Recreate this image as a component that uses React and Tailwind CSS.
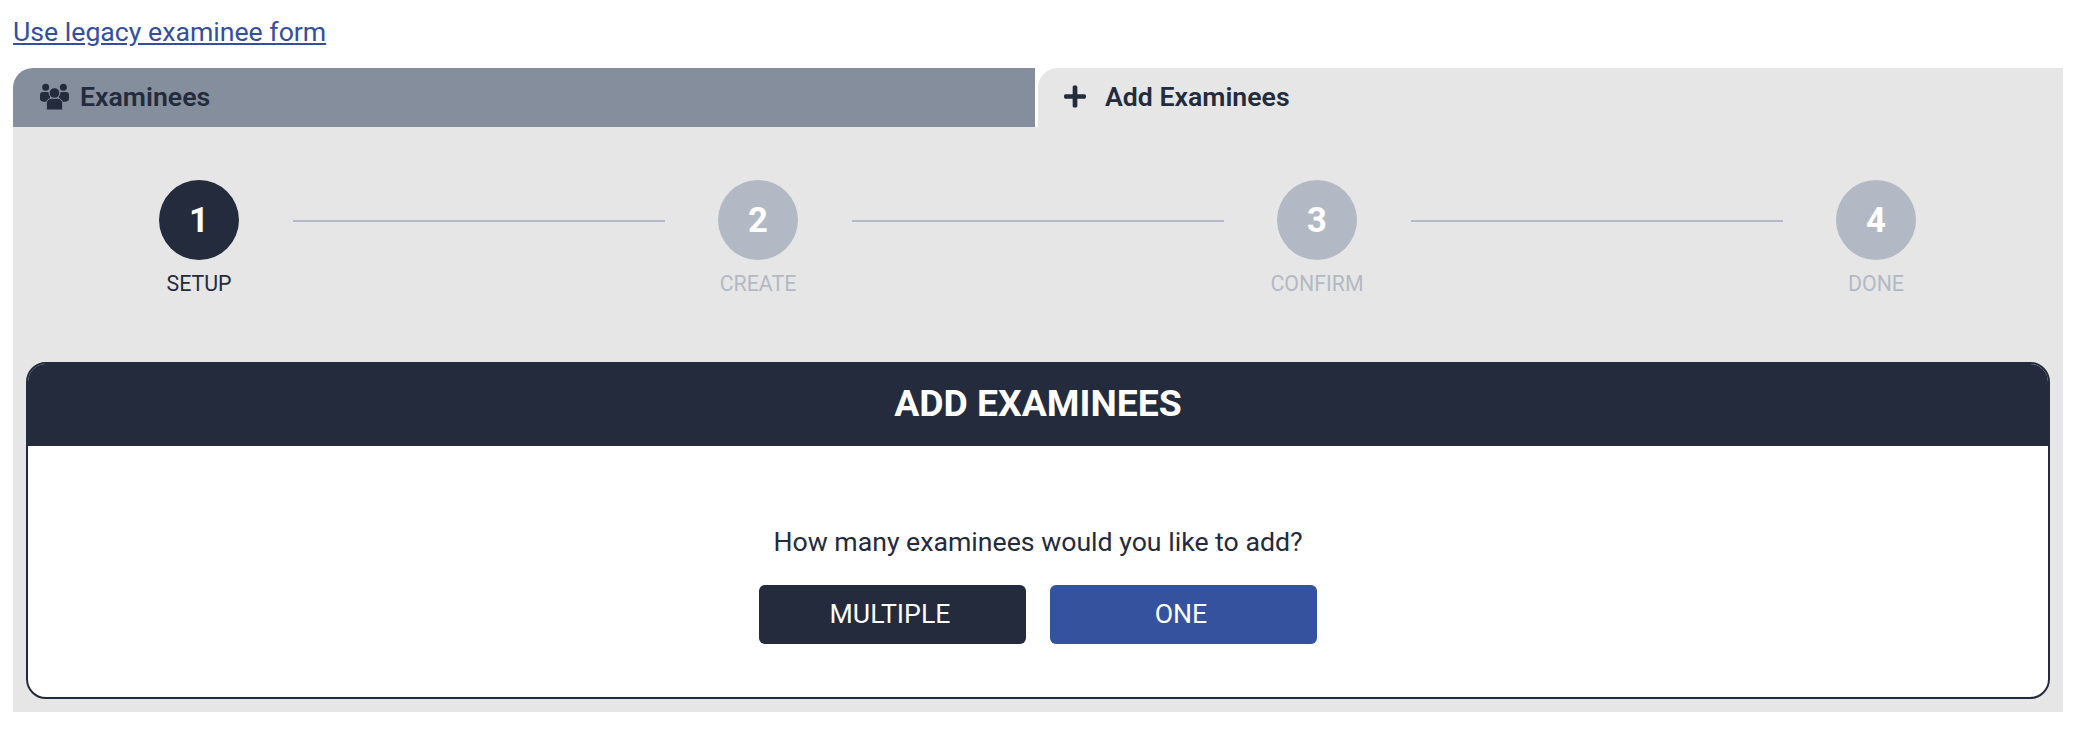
import { FaPlus } from 'react-icons/fa'

const steps = [
  { n: 1, label: 'SETUP', active: true },
  { n: 2, label: 'CREATE' },
  { n: 3, label: 'CONFIRM' },
  { n: 4, label: 'DONE' },
]

function UsersIcon() {
  return (
    <svg viewBox="0 0 87 81" className="w-[29px] h-[27px] shrink-0" fill="#232b3c">
      <circle cx="17" cy="13" r="10.5" />
      <circle cx="70" cy="13" r="10.5" />
      <rect x="0" y="27" width="30" height="29" rx="10" />
      <rect x="57" y="27" width="30" height="29" rx="10" />
      <circle cx="43.5" cy="30" r="16" stroke="#858e9c" strokeWidth="3" />
      <path d="M19 81 V62 C19 52 26 46 34 46 H53 C61 46 68 52 68 62 V81 Z" stroke="#858e9c" strokeWidth="3" />
    </svg>
  )
}

function Step({ step }) {
  return (
    <div className="w-20 flex flex-col items-center shrink-0">
      <div className={`w-20 h-20 rounded-full flex items-center justify-center text-white font-bold text-[34.67px] ${step.active ? 'bg-[#232b3c]' : 'bg-[#b3b9c4]'}`}>
        {step.n}
      </div>
      <div className={`mt-[14px] text-[21.33px] leading-[20px] whitespace-nowrap ${step.active ? 'text-[#232b3c]' : 'text-[#b3b9c4]'}`}>{step.label}</div>
    </div>
  )
}

export default function App() {
  return (
    <div className="w-[2084px] h-[740px] bg-white text-[#232b3c] font-['Roboto',sans-serif] pl-[13px] pr-[21px]">
      <div className="h-[68px] pt-[14px]">
        <a href="#" className="text-[#344f9f] underline text-[26.67px] leading-[36px]">Use legacy examinee form</a>
      </div>
      <div className="flex h-[59px]">
        <div className="w-[1022px] bg-[#858e9c] rounded-tl-[20px] flex items-center pl-[27px] pb-[2px] gap-[11px] text-[26.67px] font-semibold">
          <UsersIcon />
          <span>Examinees</span>
        </div>
        <div className="flex-1 ml-[3px] bg-[#e6e6e6] rounded-tl-[20px] flex items-center pl-[26px] pb-[2px] gap-[19px] text-[26.67px] font-semibold">
          <FaPlus className="w-[22px] h-[25px]" />
          <span>Add Examinees</span>
        </div>
      </div>
      <div className="bg-[#e6e6e6] h-[585px] px-[13px] pt-[53px]">
        <div className="flex items-start pl-[133px] pr-[134px]">
          {steps.map((s, i) => (
            <div key={s.n} className={i < 3 ? 'flex items-start flex-1' : 'flex items-start'}>
              <Step step={s} />
              {i < 3 && <div className="flex-1 h-[2px] bg-[#b3b9c8] mt-[40px] ml-[54px] mr-[53px]"></div>}
            </div>
          ))}
        </div>
        <div className="mt-[68px] h-[337px] rounded-[20px] border-2 border-[#232b3c] bg-white overflow-hidden">
          <div className="h-[82px] pb-[2px] bg-[#232b3c] text-white text-[37.33px] font-bold flex items-center justify-center">ADD EXAMINEES</div>
          <div className="flex flex-col items-center pt-[82px]">
            <div className="text-[26.67px] leading-[28px]">How many examinees would you like to add?</div>
            <div className="flex gap-6 mt-[29px]">
              <button className="w-[267px] h-[59px] pr-[5px] pb-[2px] rounded-md bg-[#232b3c] text-white text-[26.67px]">MULTIPLE</button>
              <button className="w-[267px] h-[59px] pr-[5px] pb-[2px] rounded-md bg-[#35529f] text-white text-[26.67px]">ONE</button>
            </div>
          </div>
        </div>
      </div>
    </div>
  )
}
